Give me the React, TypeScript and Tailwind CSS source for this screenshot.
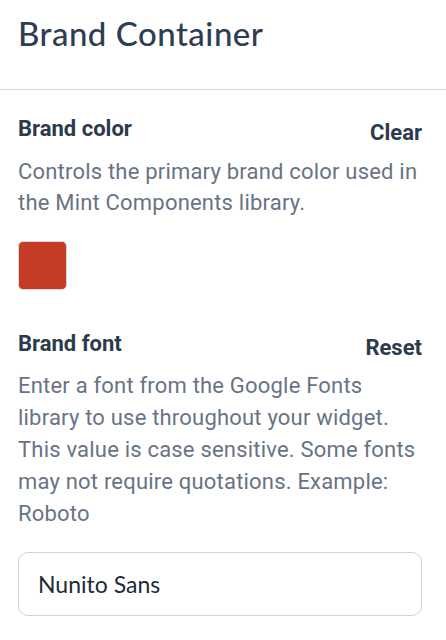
export default function App() {
  return (
    <div className="min-h-screen bg-white w-[446px] font-['Roboto',sans-serif]">
      <div className="pl-[18px] pr-[24px] pt-[13px] pb-[36px]">
        <h1 className="text-[33px] leading-[40px] text-[#2e3d4f] font-['Lato',sans-serif] font-medium tracking-[0.5px]">
          Brand Container
        </h1>
      </div>
      <div className="border-t border-[#d4d4d4]" />

      <div className="pl-[18px] pr-[24px] pt-[26px]">
        <div className="flex items-start justify-between">
          <h2 className="text-[22px] leading-[26px] font-bold text-[#2b3a4c]">Brand color</h2>
          <button className="text-[22px] leading-[26px] font-bold text-[#2b3a4c] mt-[4px]">Clear</button>
        </div>
        <p className="mt-[10px] text-[22px] leading-[31px] text-[#687385] tracking-[0.2px]">
          Controls the primary brand color used in the Mint Components library.
        </p>
        <div className="mt-[23px] w-[49px] h-[49px] rounded-[5px] bg-[#c63a28] border border-[#d8d8d8]" />

        <div className="mt-[41px] flex items-start justify-between">
          <h2 className="text-[22px] leading-[26px] font-bold text-[#2b3a4c]">Brand font</h2>
          <button className="text-[22px] leading-[26px] font-bold text-[#2b3a4c] mt-[4px]">Reset</button>
        </div>
        <p className="mt-[9px] text-[22px] leading-[32px] text-[#687385] tracking-[0.2px]">
          Enter a font from the Google Fonts library to use throughout your widget. This value is case sensitive. Some fonts may not require quotations. Example: Roboto
        </p>
        <input
          defaultValue="Nunito Sans"
          className="mt-[22px] w-full h-[64px] rounded-[10px] border border-[#d4d4d8] px-[19px] text-[23px] text-[#1f2937] font-['Lato',sans-serif] outline-none"
        />
      </div>
    </div>
  );
}
